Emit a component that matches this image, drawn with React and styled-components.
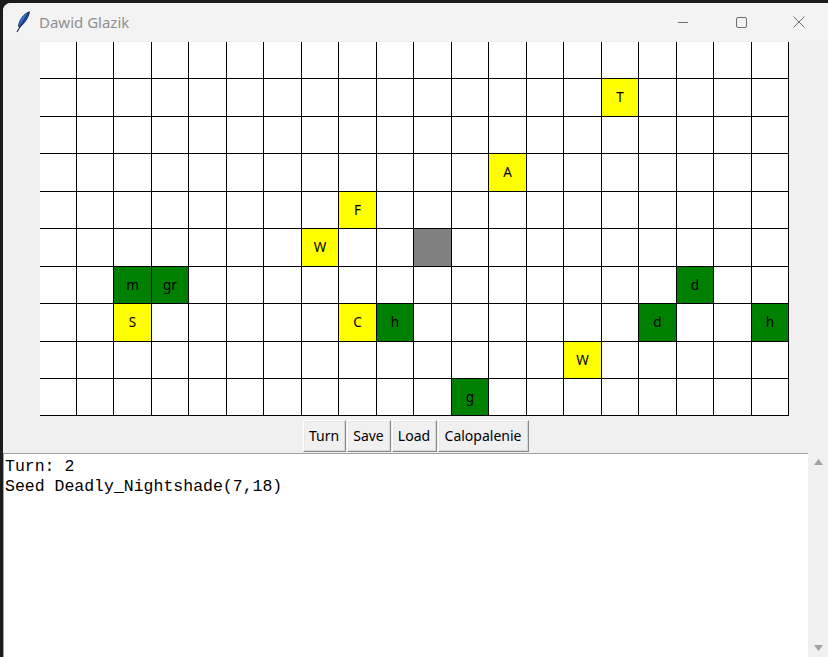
import React from "react";
import styled, { createGlobalStyle } from "styled-components";

const Global = createGlobalStyle`
  html, body { margin: 0; padding: 0; background: #1c1c1c; }
  #root { width: 828px; height: 657px; overflow: hidden; }
`;

const Desktop = styled.div`
  width: 828px;
  height: 657px;
  box-sizing: border-box;
  padding: 3px 0 0 3px;
  background: #1c1c1c;
  display: flex;
`;

const Window = styled.div`
  flex: 1;
  display: flex;
  flex-direction: column;
  background: #f0f0f0;
  border-top-left-radius: 8px;
  overflow: hidden;
`;

const TitleBar = styled.div`
  height: 38px;
  flex: none;
  display: flex;
  align-items: center;
  background: #f3f3f3;
  padding-left: 12px;
`;

const TitleText = styled.span`
  font-family: "Noto Sans", "Open Sans", sans-serif;
  font-size: 15px;
  color: #8f8f8f;
  margin-left: 8px;
  margin-top: -1px;
`;

const Controls = styled.div`
  margin-left: auto;
  display: flex;
  height: 100%;
`;

const CtrlBtn = styled.div`
  width: 58px;
  height: 100%;
  display: flex;
  align-items: center;
  justify-content: center;
`;

const Client = styled.div`
  flex: 1;
  display: flex;
  flex-direction: column;
  min-height: 0;
`;

const BoardWrap = styled.div`
  padding: 1px 0 0 37px;
  display: flex;
`;

const COLS = [37,37,38,37,38,37,38,37,38,37,38,37,38,37,38,37,38,37,38,37];
const ROWS = [37,38,37,38,37,38,37,38,37,37];

const Board = styled.div`
  display: grid;
  grid-template-columns: ${COLS.map((c) => c + "px").join(" ")};
  grid-template-rows: ${ROWS.map((r) => r + "px").join(" ")};
  background: #ffffff;
`;

const COLORS = { y: "#ffff00", g: "#008000", x: "#808080", e: "#ffffff" };

const Cell = styled.div`
  box-sizing: border-box;
  border-right: 1px solid #000;
  border-bottom: 1px solid #000;
  background: ${(p) => COLORS[p.$kind]};
  display: flex;
  align-items: center;
  justify-content: center;
  font-family: "Noto Sans", "Open Sans", sans-serif;
  font-size: 13.5px;
  color: #000;
  padding-bottom: 1px;
`;

const ButtonRow = styled.div`
  display: flex;
  justify-content: center;
  gap: 1px;
  margin-top: 4px;
`;

const TkButton = styled.button`
  height: 32px;
  box-sizing: border-box;
  padding: 0 4px 2px;
  min-width: ${(p) => p.$w}px;
  background: #f0f0f0;
  border: 1px solid;
  border-color: #ffffff #8a8a8a #8a8a8a #ffffff;
  box-shadow: inset -1px -1px 0 #d6d6d6, inset 1px 1px 0 #e8e8e8;
  font-family: "Noto Sans", "Open Sans", sans-serif;
  font-size: 14px;
  color: #000;
  cursor: default;
`;

const TextRow = styled.div`
  flex: 1;
  display: flex;
  margin-top: 1px;
  min-height: 0;
`;

const TextArea = styled.div`
  flex: 1;
  background: #ffffff;
  border-top: 1px solid #a0a0a0;
  border-left: 1px solid #a0a0a0;
  padding: 3px 0 0 1px;
  font-family: "Liberation Mono", "DejaVu Sans Mono", monospace;
  font-size: 16.5px;
  line-height: 20px;
  color: #000;
  white-space: pre;
`;

const ScrollBar = styled.div`
  width: 20px;
  flex: none;
  background: #f0f0f0;
  display: flex;
  flex-direction: column;
  justify-content: space-between;
  align-items: center;
  padding: 6px 0 6px;
  box-sizing: border-box;
`;

const Feather = () => (
  <svg width="16" height="22" viewBox="0 0 16 22">
    <defs>
      <linearGradient id="fg" x1="0" y1="0" x2="1" y2="1">
        <stop offset="0" stopColor="#9fd0ff" />
        <stop offset="0.45" stopColor="#2a72e0" />
        <stop offset="1" stopColor="#0b3580" />
      </linearGradient>
    </defs>
    <path d="M14.5 0.8 C9 2.5 4.5 8 3.4 15.5 L5.2 16 C9.5 12 13.5 7 14.5 0.8 Z" fill="url(#fg)" stroke="#1b2d55" strokeWidth="0.9" />
    <path d="M13.5 2 L2.2 20.5" stroke="#1b2d55" strokeWidth="1.2" strokeLinecap="round" />
  </svg>
);

const cells = {
  "1,15": ["T", "y"],
  "3,12": ["A", "y"],
  "4,8": ["F", "y"],
  "5,7": ["W", "y"],
  "5,10": ["", "x"],
  "6,2": ["m", "g"],
  "6,3": ["gr", "g"],
  "6,17": ["d", "g"],
  "7,2": ["S", "y"],
  "7,8": ["C", "y"],
  "7,9": ["h", "g"],
  "7,16": ["d", "g"],
  "7,19": ["h", "g"],
  "8,14": ["W", "y"],
  "9,11": ["g", "g"],
};

export default function App() {
  const grid = [];
  for (let r = 0; r < 10; r++) {
    for (let c = 0; c < 20; c++) {
      const v = cells[`${r},${c}`];
      grid.push(
        <Cell key={`${r}-${c}`} $kind={v ? v[1] : "e"}>
          {v ? v[0] : ""}
        </Cell>
      );
    }
  }
  return (
    <>
      <Global />
      <Desktop>
        <Window>
          <TitleBar>
            <Feather />
            <TitleText>Dawid Glazik</TitleText>
            <Controls>
              <CtrlBtn>
                <svg width="12" height="12" viewBox="0 0 12 12">
                  <path d="M1 6.5 H11" stroke="#6e6e6e" strokeWidth="1" />
                </svg>
              </CtrlBtn>
              <CtrlBtn>
                <svg width="13" height="13" viewBox="0 0 13 13">
                  <rect x="1.5" y="1.5" width="10" height="10" rx="1.5" fill="none" stroke="#6e6e6e" strokeWidth="1" />
                </svg>
              </CtrlBtn>
              <CtrlBtn>
                <svg width="14" height="14" viewBox="0 0 14 14">
                  <path d="M1.5 1.5 L12.5 12.5 M12.5 1.5 L1.5 12.5" stroke="#6e6e6e" strokeWidth="1" />
                </svg>
              </CtrlBtn>
            </Controls>
          </TitleBar>
          <Client>
            <BoardWrap>
              <Board>{grid}</Board>
            </BoardWrap>
            <ButtonRow>
              <TkButton $w={43}>Turn</TkButton>
              <TkButton $w={44}>Save</TkButton>
              <TkButton $w={45}>Load</TkButton>
              <TkButton $w={91}>Calopalenie</TkButton>
            </ButtonRow>
            <TextRow>
              <TextArea>{"Turn: 2\nSeed Deadly_Nightshade(7,18)"}</TextArea>
              <ScrollBar>
                <svg width="9" height="6" viewBox="0 0 9 6">
                  <path d="M0 6 L4.5 0 L9 6 Z" fill="#a3a3a3" />
                </svg>
                <svg width="9" height="6" viewBox="0 0 9 6">
                  <path d="M0 0 L9 0 L4.5 6 Z" fill="#a3a3a3" />
                </svg>
              </ScrollBar>
            </TextRow>
          </Client>
        </Window>
      </Desktop>
    </>
  );
}
